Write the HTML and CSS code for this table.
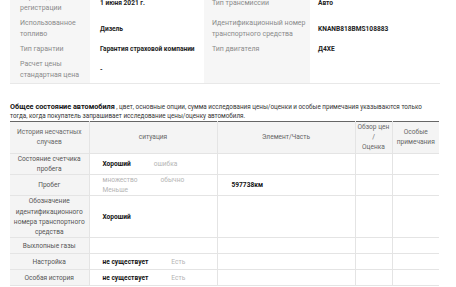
FILE: index.html
```html
<!DOCTYPE html>
<html lang="ru">
<head>
<meta charset="utf-8">
<link rel="stylesheet" href="styles.css">
</head>
<body>
<div class="page">
  <div class="spec">
    <div class="lbl">Первая дата регистрации</div>
    <div class="val">1 июня 2021 г.</div>
    <div class="lbl lbl-r">Тип трансмиссии</div>
    <div class="val val-r">Авто</div>

    <div class="lbl">Использованное топливо</div>
    <div class="val">Дизель</div>
    <div class="lbl lbl-r">Идентификационный номер транспортного средства</div>
    <div class="val val-r">KNANB818BMS108883</div>

    <div class="lbl">Тип гарантии</div>
    <div class="val">Гарантия страховой компании</div>
    <div class="lbl lbl-r">Тип двигателя</div>
    <div class="val val-r">Д4ХЕ</div>

    <div class="lbl">Расчет цены стандартная цена</div>
    <div class="val">-</div>
    <div class="lbl lbl-r"></div>
    <div class="val val-r"></div>
  </div>

  <p class="intro"><strong class="intro-title">Общее состояние автомобиля</strong> , цвет, основные опции, сумма исследования цены/оценки и особые примечания указываются только тогда, когда покупатель запрашивает исследование цены/оценку автомобиля.</p>

  <table class="cond">
    <colgroup>
      <col class="c1"><col class="c2"><col class="c3"><col class="c4"><col class="c5">
    </colgroup>
    <thead>
      <tr>
        <th>История несчастных случаев</th>
        <th>ситуация</th>
        <th>Элемент/Часть</th>
        <th>Обзор цен<br>/<br>Оценка</th>
        <th>Особые примечания</th>
      </tr>
    </thead>
    <tbody>
      <tr>
        <th>Состояние счетчика пробега</th>
        <td class="sit"><span class="on">Хороший</span><span class="off">ошибка</span></td>
        <td class="part"></td><td></td><td></td>
      </tr>
      <tr>
        <th>Пробег</th>
        <td class="sit"><span class="off">множество</span><span class="off">обычно</span><span class="off">Меньше</span></td>
        <td class="part"><b>597738км</b></td><td></td><td></td>
      </tr>
      <tr>
        <th>Обозначение идентификационного номера транспортного средства</th>
        <td class="sit"><span class="on">Хороший</span></td>
        <td class="part"></td><td></td><td></td>
      </tr>
      <tr>
        <th>Выхлопные газы</th>
        <td class="sit"></td>
        <td class="part"></td><td></td><td></td>
      </tr>
      <tr>
        <th>Настройка</th>
        <td class="sit"><span class="on">не существует</span><span class="off">Есть</span></td>
        <td class="part"></td><td></td><td></td>
      </tr>
      <tr>
        <th>Особая история</th>
        <td class="sit"><span class="on">не существует</span><span class="off">Есть</span></td>
        <td class="part"></td><td></td><td></td>
      </tr>
    </tbody>
  </table>
</div>
</body>
</html>
```

FILE: styles.css
```css
html, body {
  margin: 0;
  padding: 0;
  background: #fff;
}
body {
  font-family: Roboto, "Liberation Sans", sans-serif;
  color: #222;
  overflow: hidden;
}
.page {
  width: 456px;
  margin-top: -10px;
}
.spec {
  display: grid;
  grid-template-columns: 80px 114px 106px 130px;
  width: 430px;
  margin-left: 10px;
  border-bottom: 1px solid #e8e8e8;
}
.lbl {
  background: #f6f6f6;
  color: #8a8a8a;
  font-size: 7px;
  line-height: 11px;
  padding: 2px 4px 2px 10px;
  display: flex;
  align-items: center;
}
.lbl-r {
  padding-left: 8px;
}
.val {
  font-size: 6.6px;
  line-height: 11px;
  font-weight: 700;
  color: #222;
  white-space: nowrap;
  padding: 2px 2px 2px 10px;
  display: flex;
  align-items: center;
}
.val-r {
  padding-left: 8px;
}
.intro {
  margin: 18px 0 0 10px;
  width: 428px;
  font-size: 6.3px;
  line-height: 9px;
  color: #333;
}
.intro-title {
  font-size: 7.3px;
  font-weight: 700;
  color: #111;
}
.cond {
  margin: 0 0 0 10px;
  width: 429px;
  border-collapse: collapse;
  table-layout: fixed;
  border-top: 1px solid #666;
  font-size: 6.6px;
  line-height: 10.2px;
}
.c1 { width: 79px; }
.c2 { width: 128px; }
.c3 { width: 138px; }
.c4 { width: 37px; }
.c5 { width: 47px; }
.cond th,
.cond td {
  border: 1px solid #e4e4e4;
  border-top: none;
  height: 15px;
  padding: 0 1px;
  vertical-align: middle;
}
.cond tr > :first-child { border-left: none; }
.cond tr > :last-child { border-right: none; }
.cond thead th {
  background: #f4f4f4;
  color: #666;
  font-weight: 400;
  text-align: center;
}
.cond tbody th {
  background: #f4f4f4;
  color: #555;
  font-weight: 400;
  text-align: center;
}
.cond .sit {
  padding-left: 13px;
}
.sit span {
  display: inline-block;
  vertical-align: top;
  margin-right: 23px;
}
.on {
  font-weight: 700;
  color: #111;
}
.off {
  color: #b4b4b4;
}
.cond .part {
  padding-left: 14px;
}
.part b {
  font-weight: 700;
  color: #111;
}
```
